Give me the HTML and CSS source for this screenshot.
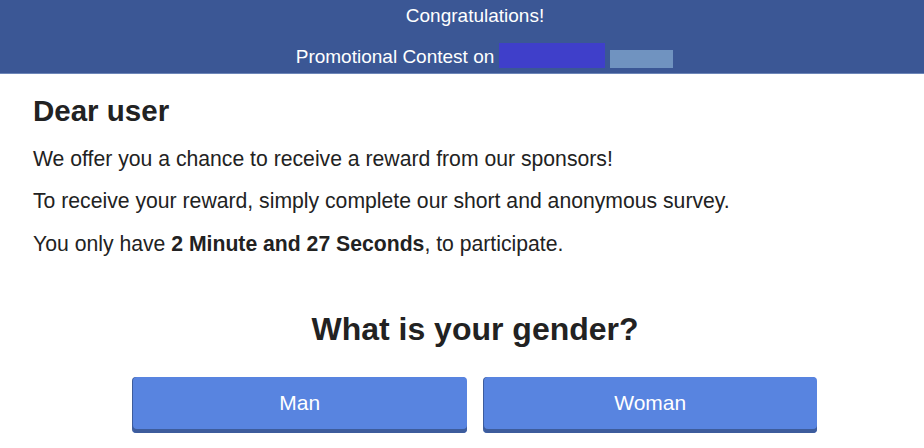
FILE: index.html
```html
<!DOCTYPE html>
<html lang="en">
<head>
<meta charset="utf-8">
<title>Congratulations!</title>
<link rel="stylesheet" href="styles.css">
</head>
<body>
<div class="page">
  <header class="banner">
    <div class="banner-title">Congratulations!</div>
    <div class="banner-sub">
      <span>Promotional Contest on</span>
      <span class="mask mask-blue"></span>
      <span class="mask mask-grey"></span>
    </div>
  </header>
  <main class="content">
    <h1 class="greeting">Dear user</h1>
    <p class="line">We offer you a chance to receive a reward from our sponsors!</p>
    <p class="line">To receive your reward, simply complete our short and anonymous survey.</p>
    <p class="line">You only have <strong>2 Minute and 27 Seconds</strong>, to participate.</p>
    <h2 class="question">What is your gender?</h2>
    <div class="answers">
      <button class="answer" type="button">Man</button>
      <button class="answer" type="button">Woman</button>
    </div>
  </main>
</div>
</body>
</html>
```
FILE: styles.css
```css
html, body {
  margin: 0;
  padding: 0;
  overflow: hidden;
  background: #ffffff;
}
body {
  font-family: "Liberation Sans", Arial, sans-serif;
  color: #222222;
}
.page {
  width: 950px;
}
.banner {
  background: #3b5795;
  border-bottom: 1px solid #6d86b8;
  height: 73px;
  color: #ffffff;
  text-align: center;
  font-size: 19px;
  display: flex;
  flex-direction: column;
  align-items: center;
}
.banner-title {
  margin-top: 5px;
  line-height: 22px;
}
.banner-sub {
  margin-top: 16px;
  padding-left: 19px;
  display: flex;
  align-items: flex-end;
  line-height: 22px;
}
.mask {
  display: inline-block;
}
.mask-blue {
  width: 106px;
  height: 25px;
  background: #3f3fca;
  margin-left: 5px;
}
.mask-grey {
  width: 63px;
  height: 18px;
  background: #7093c0;
  margin-left: 5px;
}
.content {
  padding: 0 0 0 33px;
  width: 884px;
}
.greeting {
  font-size: 29.5px;
  font-weight: bold;
  margin: 19.5px 0 0;
  line-height: 34px;
}
.line {
  font-size: 21.2px;
  margin: 18.5px 0 0;
  line-height: 24px;
}
.greeting + .line {
  margin-top: 19px;
}
.question {
  text-align: center;
  font-size: 32px;
  font-weight: bold;
  margin: 55px 0 0;
  line-height: 37px;
}
.answers {
  display: flex;
  gap: 17px;
  margin: 29px 100px 0;
}
.answer {
  flex: 1;
  height: 56px;
  border: none;
  border-radius: 4px;
  background: #5884e0;
  box-shadow: inset 0 -4px 0 #3d5c9c, -1px 0 0 #3d5c9c;
  color: #ffffff;
  font-family: "Liberation Sans", Arial, sans-serif;
  font-size: 21px;
  padding: 0 0 4px;
  cursor: pointer;
}
```
